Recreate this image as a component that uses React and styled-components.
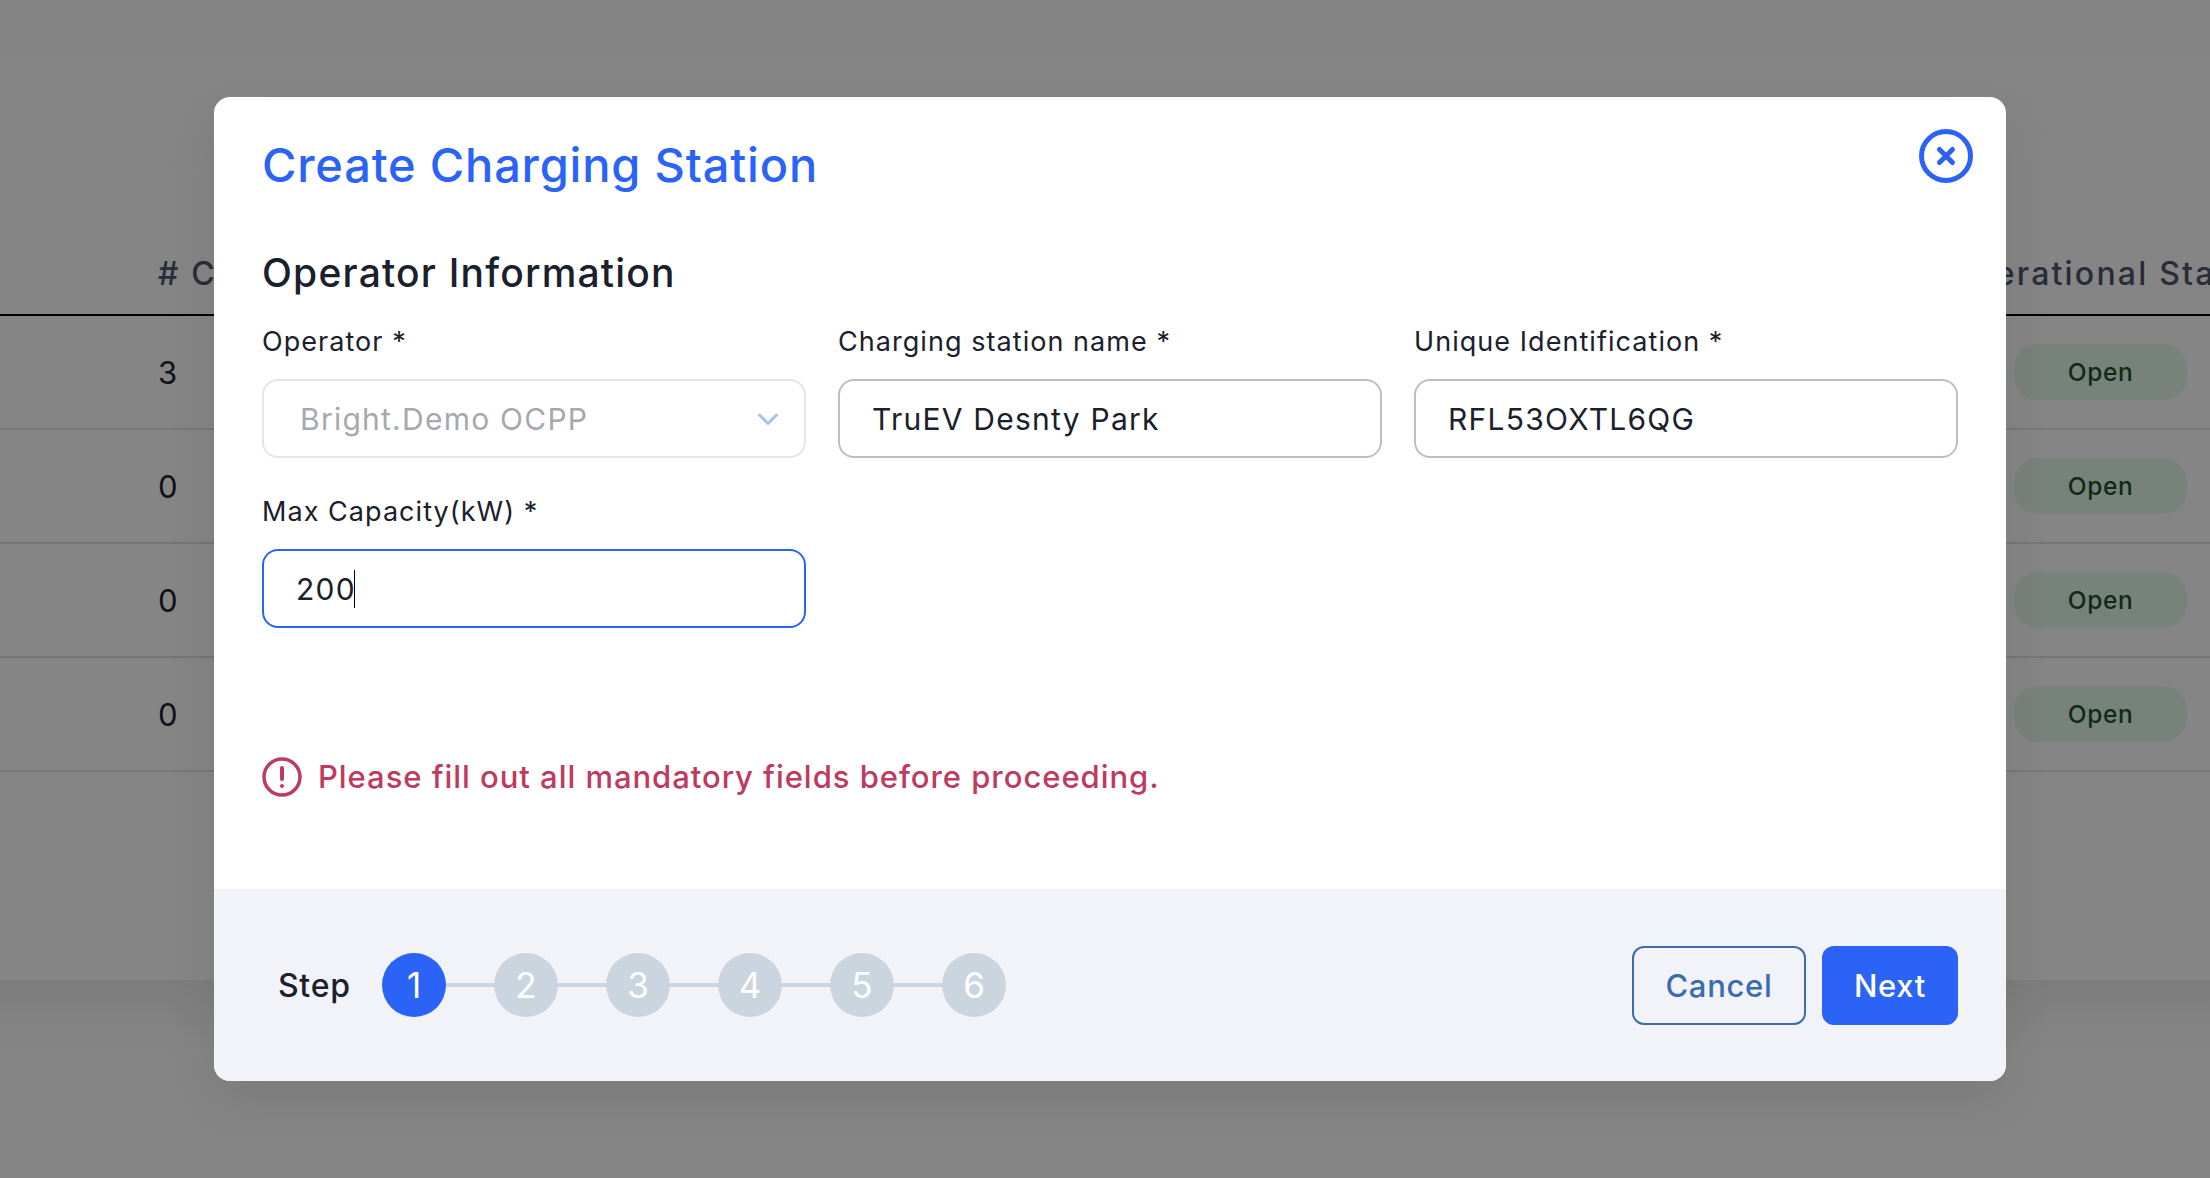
import React from 'react'
import styled, { createGlobalStyle } from 'styled-components'

const GlobalStyle = createGlobalStyle`
  html, body { margin: 0; padding: 0; }
  body { font-family: Inter, "Open Sans", sans-serif; background: #dedede; }
`

const Page = styled.div`
  position: relative;
  width: 2210px;
  height: 1178px;
  overflow: hidden;
  background: #dedede;
  color: #1a202c;
`

const TopBar = styled.div`
  height: 58px;
  background: #dbdbdb;
`

const Table = styled.div`
  margin-top: 194px;
  height: 728px;
`

const HeadRow = styled.div`
  height: 42px;
  display: flex;
  justify-content: space-between;
  align-items: center;
  padding: 0 0 20px 158px;
  border-bottom: 2px solid #000;
  font-size: 32px;
  font-weight: 500;
  letter-spacing: 2.2px;
  color: #434c5f;
  white-space: nowrap;
`

const StatusHead = styled.span`
  flex: none;
  width: 263px;
`

const Row = styled.div`
  height: 112px;
  display: flex;
  justify-content: space-between;
  align-items: center;
  padding: 0 23px 0 158px;
  border-bottom: 2px solid #bcc6d0;
  font-size: 31px;
  color: #1a202c;
`

const Pill = styled.span`
  width: 173px;
  height: 56px;
  display: flex;
  align-items: center;
  justify-content: center;
  border-radius: 24px;
  background: #c6d9cb;
  color: #184a24;
  font-size: 24.5px;
  font-weight: 500;
  letter-spacing: 0.6px;
`

const Below = styled.div`
  height: 198px;
  background: linear-gradient(#d0d0d0, #dedede 70px);
`

const Overlay = styled.div`
  position: absolute;
  inset: 0;
  padding: 97px 0 0 214px;
  background: rgba(0, 0, 0, 0.4);
`

const Modal = styled.div`
  position: relative;
  width: 1792px;
  height: 984px;
  display: flex;
  flex-direction: column;
  border-radius: 16px;
  overflow: hidden;
  background: #fff;
  box-shadow: 0 20px 50px rgba(0, 0, 0, 0.08);
`

const Body = styled.div`
  flex: 1;
  padding: 40px 48px 0 48px;
`

const Title = styled.h1`
  margin: 0;
  font-size: 47px;
  line-height: 56px;
  font-weight: 500;
  letter-spacing: 0.8px;
  color: #2b63f6;
`

const CloseButton = styled.button`
  position: absolute;
  top: 32px;
  right: 33px;
  width: 54px;
  height: 54px;
  padding: 0;
  border: 0;
  background: none;
  color: #2b63f6;
`

const SectionTitle = styled.h2`
  margin: 56px 0 0;
  font-size: 39px;
  line-height: 48px;
  font-weight: 500;
  letter-spacing: 1.2px;
  color: #1a202c;
`

const FormGrid = styled.div`
  display: grid;
  grid-template-columns: repeat(3, 1fr);
  column-gap: 32px;
  row-gap: 38px;
  margin-top: 29px;
`

const Group = styled.div`
  display: flex;
  flex-direction: column;
  gap: 21px;
`

const Label = styled.label`
  font-size: 27px;
  line-height: 32px;
  letter-spacing: 1.05px;
  color: #1a202c;
`

const Field = styled.div`
  position: relative;
  box-sizing: border-box;
  height: 79px;
  display: flex;
  align-items: center;
  padding: 0 32px;
  border: 2px solid ${p => (p.$focus ? '#2b63f6' : p.$disabled ? '#e5e5e5' : '#bfbfbf')};
  border-radius: 16px;
  font-size: 30px;
  letter-spacing: 1.25px;
  color: ${p => (p.$disabled ? '#a6a8ad' : '#1a202c')};
  ${p => p.$disabled && 'padding-left: 36px;'}
`

const Caret = styled.span`
  width: 1.5px;
  height: 38px;
  margin-left: -2px;
  background: #000;
`

const Chevron = styled.svg`
  position: absolute;
  right: 25px;
  top: 50%;
  width: 22px;
  height: 14px;
  margin-top: -7px;
  color: #a5bffa;
`

const ErrorLine = styled.div`
  display: flex;
  align-items: center;
  gap: 16px;
  margin-top: 129px;
  font-size: 31px;
  line-height: 40px;
  font-weight: 500;
  letter-spacing: 0.96px;
  color: #be3a5e;
`

const Footer = styled.div`
  flex: none;
  height: 192px;
  display: flex;
  align-items: center;
  justify-content: space-between;
  padding: 0 48px 0 64px;
  background: #f1f3f9;
`

const Stepper = styled.div`
  display: flex;
  align-items: center;
`

const StepLabel = styled.span`
  width: 104px;
  font-size: 32px;
  font-weight: 500;
  letter-spacing: 0.7px;
  color: #1a202c;
`

const Dot = styled.span`
  width: 64px;
  height: 64px;
  display: flex;
  align-items: center;
  justify-content: center;
  border-radius: 50%;
  background: ${p => (p.$active ? '#2b63f6' : '#cbd5e0')};
  color: #fff;
  font-size: 35px;
`

const Link = styled.span`
  width: 48px;
  height: 4px;
  background: #cbd5e0;
`

const Actions = styled.div`
  display: flex;
  gap: 16px;
`

const Button = styled.button`
  box-sizing: border-box;
  height: 79px;
  padding: 0;
  border-radius: 12px;
  font-family: inherit;
  font-size: 31px;
  font-weight: 500;
  letter-spacing: 0.7px;
  border: 2px solid ${p => (p.$primary ? '#2b63f6' : '#3b6cae')};
  background: ${p => (p.$primary ? '#2b63f6' : 'transparent')};
  color: ${p => (p.$primary ? '#fff' : '#3b6cae')};
  width: ${p => (p.$primary ? '136px' : '174px')};
`

const rows = ['3', '0', '0', '0']
const steps = [1, 2, 3, 4, 5, 6]

const App = () => (
  <Page>
    <GlobalStyle />
    <TopBar />
    <Table>
      <HeadRow>
        <span># Connectors</span>
        <StatusHead>Operational Status</StatusHead>
      </HeadRow>
      {rows.map((n, i) => (
        <Row key={i}>
          {n}
          <Pill>Open</Pill>
        </Row>
      ))}
    </Table>
    <Below />
    <Overlay>
      <Modal>
        <CloseButton aria-label="Close">
          <svg viewBox="0 0 54 54" width="54" height="54" fill="none" stroke="currentColor">
            <circle cx="27" cy="27" r="24.5" strokeWidth="5" />
            <path d="M20.5 20.5l13 13M33.5 20.5l-13 13" strokeWidth="5" strokeLinecap="round" />
          </svg>
        </CloseButton>
        <Body>
          <Title>Create Charging Station</Title>
          <SectionTitle>Operator Information</SectionTitle>
          <FormGrid>
            <Group>
              <Label>Operator *</Label>
              <Field $disabled>
                Bright.Demo OCPP
                <Chevron viewBox="0 0 22 14" fill="none" stroke="currentColor">
                  <path d="M2.5 3l8.5 8.5L19.5 3" strokeWidth="3" strokeLinecap="round" strokeLinejoin="round" />
                </Chevron>
              </Field>
            </Group>
            <Group>
              <Label>Charging station name *</Label>
              <Field>TruEV Desnty Park</Field>
            </Group>
            <Group>
              <Label>Unique Identification *</Label>
              <Field>RFL53OXTL6QG</Field>
            </Group>
            <Group>
              <Label>Max Capacity(kW) *</Label>
              <Field $focus>
                200
                <Caret />
              </Field>
            </Group>
          </FormGrid>
          <ErrorLine>
            <svg viewBox="0 0 40 40" width="40" height="40" fill="none" stroke="currentColor">
              <circle cx="20" cy="20" r="18" strokeWidth="3.5" />
              <path d="M20 11v11" strokeWidth="4" strokeLinecap="round" />
              <circle cx="20" cy="29" r="2" fill="currentColor" stroke="none" />
            </svg>
            Please fill out all mandatory fields before proceeding.
          </ErrorLine>
        </Body>
        <Footer>
          <Stepper>
            <StepLabel>Step</StepLabel>
            {steps.map(n => (
              <React.Fragment key={n}>
                {n > 1 && <Link />}
                <Dot $active={n === 1}>{n}</Dot>
              </React.Fragment>
            ))}
          </Stepper>
          <Actions>
            <Button>Cancel</Button>
            <Button $primary>Next</Button>
          </Actions>
        </Footer>
      </Modal>
    </Overlay>
  </Page>
)

export default App
